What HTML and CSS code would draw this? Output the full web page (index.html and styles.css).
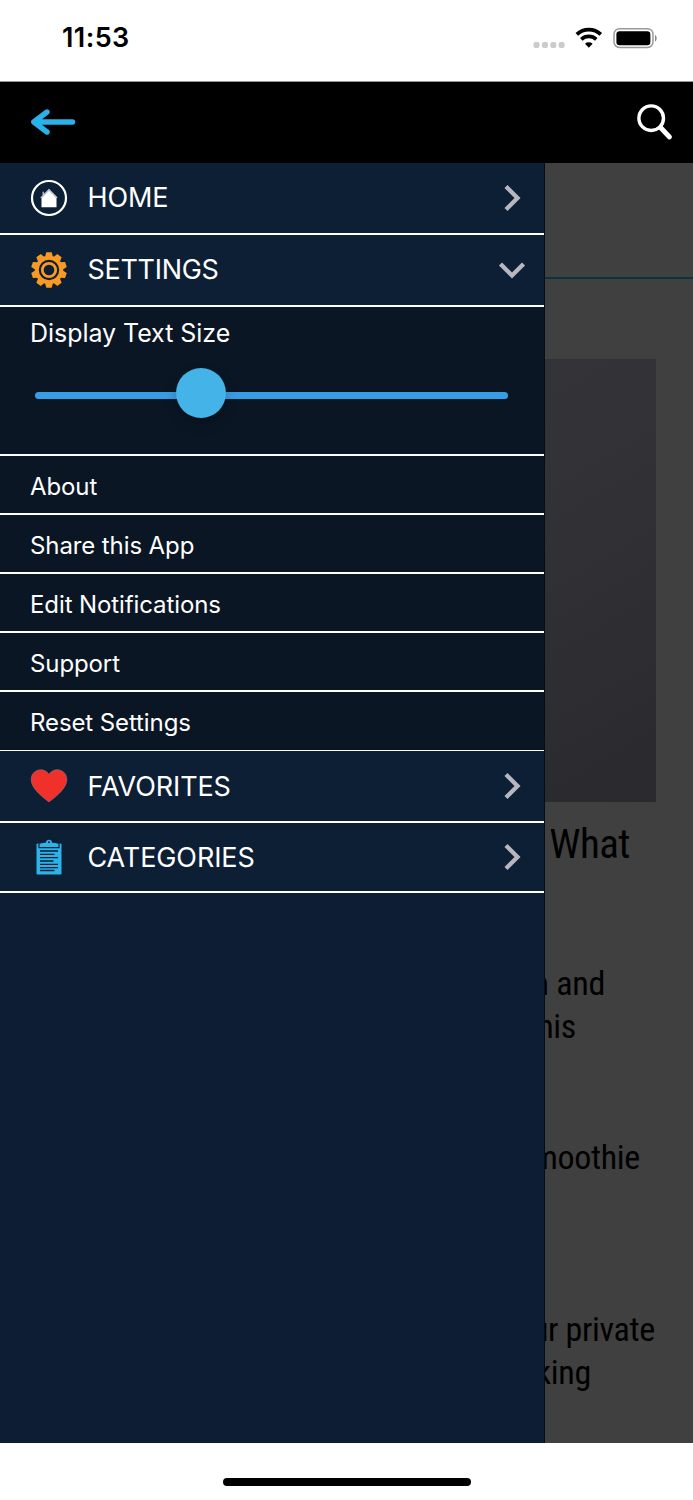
FILE: index.html
```html
<!DOCTYPE html>
<html lang="en">
<head>
    <meta charset="UTF-8">
    <meta name="viewport" content="width=device-width, initial-scale=1.0">
    <title>Menu</title>
    <link rel="stylesheet" href="styles.css">
</head>
<body>
    <div class="status">
        <span class="time">11:53</span>
        <svg class="status-icons" width="126" height="24" viewBox="0 0 126 24">
            <g fill="#cbcbcb">
                <rect x="1.5" y="16" width="6" height="6" rx="2"/>
                <rect x="10" y="16" width="6" height="6" rx="2"/>
                <rect x="18.3" y="16" width="6" height="6" rx="2"/>
                <rect x="26.6" y="16" width="6" height="6" rx="2"/>
            </g>
            <g fill="none" stroke="#000" stroke-width="3.7">
                <path d="M44.8 8.3a17.5 17.5 0 0 1 24 0"/>
                <path d="M49.3 13.3a11 11 0 0 1 15 0"/>
            </g>
            <path d="M53 17.7a5.6 5.6 0 0 1 7.6 0l-3.8 4.1z" fill="#000"/>
            <rect x="82" y="2.7" width="39" height="18.8" rx="5.5" fill="#fff" stroke="#999" stroke-width="1.5"/>
            <rect x="84.4" y="5.2" width="34" height="14" rx="3.2" fill="#000"/>
            <path d="M123 9c2.2.8 2.2 5.6 0 6.4z" fill="#888"/>
        </svg>
    </div>
    <div class="header">
        <svg width="46" height="28" viewBox="0 0 46 28">
            <path d="M17 4L3.8 14L17 24M4.5 14H42.5" fill="none" stroke="#29b1ea" stroke-width="5.400" stroke-linecap="round" stroke-linejoin="round"/>
            <path d="M3 14l9-6v12z" fill="#29b1ea"/>
        </svg>
        <svg width="38" height="38" viewBox="0 0 38 38" fill="none" stroke="#fff">
            <circle cx="15.2" cy="15.2" r="12.3" stroke-width="3.4"/>
            <path d="M24.5 24.5L33.5 34" stroke-width="4.8" stroke-linecap="round"/>
        </svg>
    </div>
    <div class="main">
        <div class="article">
            <div class="rule"></div>
            <div class="photo"></div>
            <p class="title">What</p>
            <p class="line and">n and</p>
            <p class="line this">this</p>
            <p class="line smoothie">smoothie</p>
            <p class="line private">your private</p>
            <p class="line making">making</p>
        </div>
        <div class="menu">
            <div class="item">
                <svg class="icon" viewBox="0 0 38 38">
                    <circle cx="19" cy="19" r="17" fill="none" stroke="#fff" stroke-width="2.2"/>
                    <path d="M11.5 28.3V19l7.500-7.500 7.500 7.500v9.300z" fill="#fff"/>
                    <path d="M10.8 18.8L19 10.6l8.200 8.200M13.2 16v-3.200" fill="none" stroke="#d5dae0" stroke-width="1.2"/>
                </svg>
                <span>HOME</span>
                <svg class="arrow" viewBox="0 0 28 28"><path d="M8 2.5L19.5 14L8 25.5"/></svg>
            </div>
            <div class="item">
                <svg class="icon" viewBox="-19 -19 38 38">
                    <g fill="#f99a25">
                        <path id="tooth" d="M-4.2 -12l1.500-5.800h5.400l1.500 5.800z"/>
                        <use href="#tooth" transform="rotate(36)"/>
                        <use href="#tooth" transform="rotate(72)"/>
                        <use href="#tooth" transform="rotate(108)"/>
                        <use href="#tooth" transform="rotate(144)"/>
                        <use href="#tooth" transform="rotate(180)"/>
                        <use href="#tooth" transform="rotate(216)"/>
                        <use href="#tooth" transform="rotate(252)"/>
                        <use href="#tooth" transform="rotate(288)"/>
                        <use href="#tooth" transform="rotate(324)"/>
                    </g>
                    <g fill="none" stroke="#f99a25">
                        <circle r="12.2" stroke-width="4"/>
                        <circle r="6.7" stroke-width="2.8"/>
                    </g>
                </svg>
                <span class="settings">SETTINGS</span>
                <svg class="arrow" viewBox="0 0 28 28"><path d="M2.5 8L14 19.5L25.5 8"/></svg>
            </div>
            <div class="size">
                <p>Display Text Size</p>
                <div class="track"><div class="knob"></div></div>
            </div>
            <div class="sub">About</div>
            <div class="sub">Share this App</div>
            <div class="sub">Edit Notifications</div>
            <div class="sub">Support</div>
            <div class="sub last">Reset Settings</div>
            <div class="item low">
                <svg class="icon" viewBox="0 0 38 38">
                    <path d="M19 35C15 31.5 1.2 22.5 1.2 12.5C1.2 2 14.5 -.5 19 7.5C23.5 -.5 36.8 2 36.8 12.5C36.8 22.5 23 31.5 19 35z" fill="#ef302b" stroke="#a8717a" stroke-width=".6"/>
                </svg>
                <span>FAVORITES</span>
                <svg class="arrow" viewBox="0 0 28 28"><path d="M8 2.5L19.5 14L8 25.5"/></svg>
            </div>
            <div class="item low short">
                <svg class="icon" viewBox="0 0 38 38">
                    <rect x="6.5" y="5.5" width="25" height="31" rx="1" fill="#2bb3ea"/>
                    <path d="M9 4.500v5.200h20V4.500" fill="none" stroke="#0d1f35" stroke-width="1.2"/>
                    <path d="M9.8 9c0-3 2-4.200 6.200-4.200a3 3 0 0 1 6 0c4.200 0 6.200 1.200 6.200 4.200z" fill="#2bb3ea"/>
                    <circle cx="19" cy="4.2" r="1" fill="#0d1f35"/>
                    <path d="M10 13h18M10 16.3h14.500M10 19.7h18M10 23h13.500M10 26.3h18M10 29.6h18M10 32.5h14.500" stroke="#0d1f35" stroke-width="1.3"/>
                </svg>
                <span>CATEGORIES</span>
                <svg class="arrow" viewBox="0 0 28 28"><path d="M8 2.5L19.5 14L8 25.5"/></svg>
            </div>
        </div>
    </div>
    <div class="footer">
        <div class="home-bar"></div>
    </div>
</body>
</html>
```
FILE: styles.css
```css
*{
    margin: 0;
    padding: 0;
    box-sizing: border-box;
}
body{
    width: 693px;
    height: 1500px;
    background: #fff;
    font-family: Inter, "Liberation Sans", sans-serif;
    overflow: hidden;
}
.status{
    height: 82px;
    padding: 0 35px 5px 62px;
    border-bottom: 1px solid #999;
    display: flex;
    align-items: center;
    justify-content: space-between;
}
.time{
    font-size: 27px;
    font-weight: 600;
    line-height: 30px;
    letter-spacing: .4px;
}
.header{
    height: 81px;
    padding: 0 19px 1px 30px;
    background: #000;
    display: flex;
    align-items: center;
    justify-content: space-between;
}
.main{
    position: relative;
    height: 1280px;
    background: #404040;
    overflow: hidden;
}
/* page behind the menu */
.article{
    font-family: "Roboto Condensed", Roboto, sans-serif;
    font-stretch: 75%;
    color: #000;
    text-align: right;
    padding-top: 114px;
}
.rule{
    height: 2px;
    background: #0a3340;
}
.photo{
    height: 443px;
    margin: 80px 37px 0 38px;
    background: linear-gradient(150deg, #343438, #333237 50%, #29292e);
}
.title{
    font-size: 41px;
    line-height: 48px;
    letter-spacing: -.5px;
    margin: 18px 63px 0 0;
}
.line{
    font-size: 34px;
    line-height: 42px;
    letter-spacing: -.3px;
}
.and{
    margin: 94px 88px 0 0;
}
.this{
    margin: 1px 117px 0 0;
}
.smoothie{
    margin: 89px 53px 0 0;
}
.private{
    margin: 130px 38px 0 0;
}
.making{
    margin: 1px 102px 0 0;
}
.menu{
    position: absolute;
    left: 0;
    top: 0;
    width: 545px;
    height: 100%;
    background: #0d1e34;
    border-right: 1px solid #050d17;
    color: #fff;
}
.item{
    height: 72px;
    padding: 0 18px 1px 29.5px;
    background: #0d1f35;
    border-bottom: 2px solid #fff;
    display: flex;
    align-items: center;
    font-size: 27px;
}
.item span{
    flex: 1;
    margin-left: 20px;
    letter-spacing: -.1px;
}
.item .settings{
    letter-spacing: -.3px;
}
.low{
    padding-bottom: 0;
}
.short{
    height: 70px;
}
.icon{
    width: 38px;
    height: 38px;
}
.arrow{
    width: 28px;
    height: 28px;
    fill: none;
    stroke: #b8b7c0;
    stroke-width: 4.3;
}
.size{
    height: 149px;
    padding: 10px 35px 0;
    background: #0b1625;
    border-bottom: 2px solid #fff;
    font-size: 25px;
}
.size p{
    line-height: 32px;
    margin-left: -5px;
    letter-spacing: -.05px;
}
.track{
    position: relative;
    width: 473px;
    height: 7px;
    margin-top: 43px;
    border-radius: 4px;
    background: #389de5;
}
.knob{
    position: absolute;
    left: 140.5px;
    top: -24px;
    width: 50px;
    height: 50px;
    border-radius: 50%;
    background: #44b3e8;
    box-shadow: 0 6px 12px rgba(0, 0, 0, .25);
}
.sub{
    height: 59px;
    padding: 2px 30px 0;
    line-height: 57px;
    background: #0b1625;
    border-bottom: 2px solid #fff;
    font-size: 24px;
    letter-spacing: -.1px;
}
.last{
    border-bottom-width: 1px;
}
.footer{
    height: 57px;
    padding-top: 35px;
    background: #fff;
}
.home-bar{
    width: 248px;
    height: 8px;
    margin: 0 auto;
    border-radius: 4px;
    background: #000;
}
```
